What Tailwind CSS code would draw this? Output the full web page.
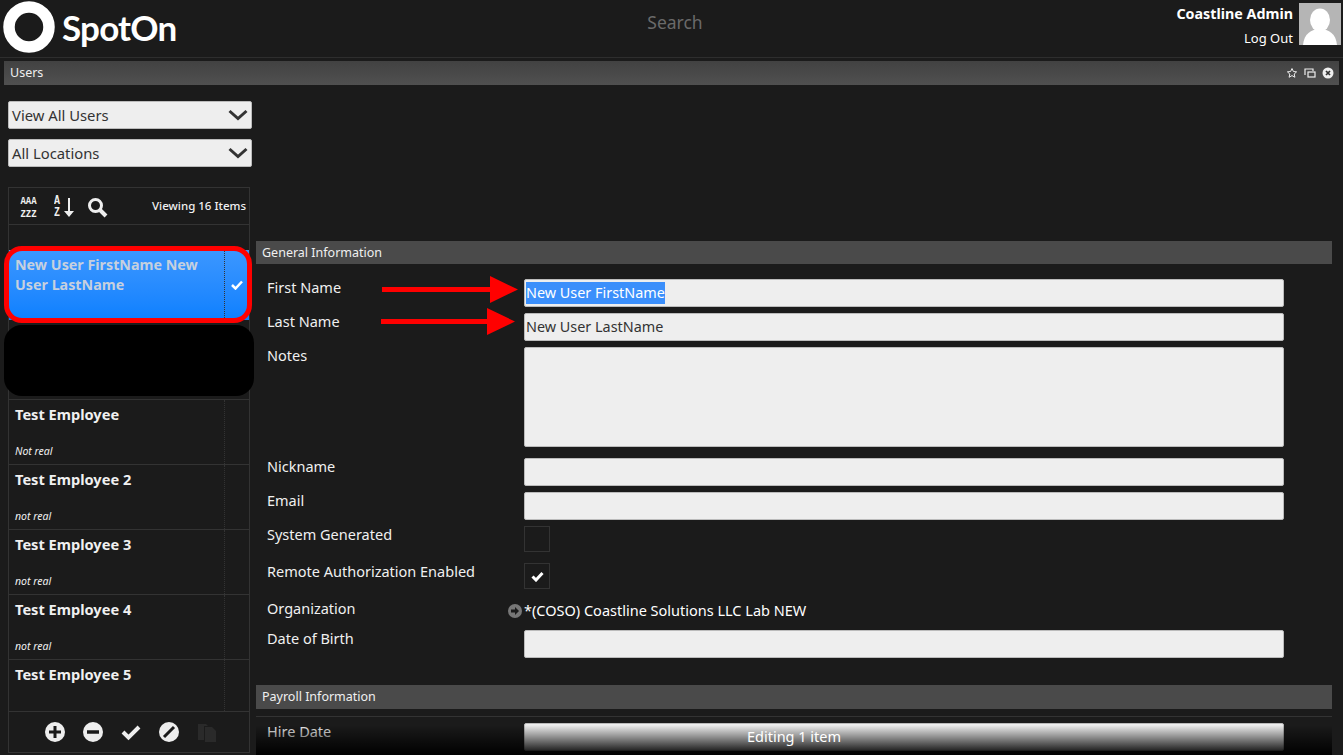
<!DOCTYPE html>
<html>
<head>
<meta charset="utf-8">
<title>Users</title>
<script src="https://cdn.jsdelivr.net/npm/@tailwindcss/browser@4"></script>
</head>
<body class="bg-[#1b1b1b] text-[#f0f0f0] font-['Noto_Sans',sans-serif] text-[14.5px] h-[755px] w-[1343px] overflow-hidden relative">

<!-- Header -->
<header class="h-[58px] flex items-start border-b border-[#2e2e2e]">
  <div class="w-[480px] flex items-center pl-[3px] pt-[1px]">
    <svg width="52" height="52" viewBox="0 0 52 52"><circle cx="26" cy="26" r="20" fill="none" stroke="#fff" stroke-width="11.500"/></svg>
    <span class="ml-[7px] text-[35px] leading-[52px] font-['Lato',sans-serif] font-bold text-white tracking-[-0.8px]">SpotOn</span>
  </div>
  <div class="w-[390px] text-center text-[#6a6a6a] text-[17.500px] leading-[24px] pt-[10px]">Search</div>
  <div class="flex-1 flex justify-end pr-[2px] pt-[3px]">
    <div class="text-right pr-[6px]">
      <div class="font-bold text-[14.300px] leading-[20px] mt-[1px] text-white">Coastline Admin</div>
      <div class="text-[13px] leading-[20px] mt-[4px] text-white">Log Out</div>
    </div>
    <div class="w-[42px] h-[42px] bg-[#b5b5b5] overflow-hidden">
      <svg width="42" height="42" viewBox="0 0 42 42"><ellipse cx="21" cy="17" rx="10" ry="11.5" fill="#fff"/><path d="M4 42c1-11 8-16 17-16s16 5 17 16z" fill="#fff"/></svg>
    </div>
  </div>
</header>

<!-- Panel title -->
<div class="mx-[4px] mt-[3px] h-[24px] bg-gradient-to-b from-[#424242] to-[#505050] flex items-center justify-between pl-[6px] pr-[5px] text-[12.500px]">
  <span>Users</span>
  <span class="flex items-center gap-[6px]">
    <svg width="12" height="12" viewBox="0 0 24 24" fill="none" stroke="#eee" stroke-width="2"><path d="M12 3l2.8 6 6.4.7-4.8 4.3 1.4 6.5L12 17.2 6.2 20.5 7.6 14 2.8 9.7 9.2 9z"/></svg>
    <svg width="12" height="12" viewBox="0 0 12 12" fill="none" stroke="#eee" stroke-width="1.2"><path d="M1 8V2h8v2"/><rect x="4" y="5" width="7" height="5"/></svg>
    <svg width="12" height="12" viewBox="0 0 24 24"><circle cx="12" cy="12" r="11" fill="#eee"/><path d="M8 8l8 8M16 8l-8 8" stroke="#333" stroke-width="3.5"/></svg>
  </span>
</div>

<div class="flex h-[670px]">
  <!-- Left column -->
  <aside class="w-[256px] shrink-0 pl-[8px] pt-[16px]">
    <div class="w-[244px] h-[28px] bg-[#eeeeee] rounded-[2px] border border-[#bbb] flex items-center justify-between pl-[3px] pr-[3px] text-[#333] text-[14.800px]">
      <span>View All Users</span>
      <svg width="20" height="12" viewBox="0 0 20 12" fill="none" stroke="#333" stroke-width="3"><path d="M1.5 2l8.500 7.500L18.500 2"/></svg>
    </div>
    <div class="w-[244px] h-[28px] mt-[10px] bg-[#eeeeee] rounded-[2px] border border-[#bbb] flex items-center justify-between pl-[3px] pr-[3px] text-[#333] text-[14.800px]">
      <span>All Locations</span>
      <svg width="20" height="12" viewBox="0 0 20 12" fill="none" stroke="#333" stroke-width="3"><path d="M1.5 2l8.500 7.500L18.500 2"/></svg>
    </div>

    <div class="w-[242px] h-[566px] mt-[20px] border border-[#333] flex flex-col">
      <div class="h-[37px] shrink-0 border-b border-[#333] flex items-center pl-[11px] pr-[3px]">
        <span class="w-[17px] mt-[4px] text-[9px] leading-[10px] font-bold text-center font-['Liberation_Mono',monospace] scale-y-[1.3]">AAA<br>ZZZ</span>
        <span class="ml-[17px] mt-[4px] w-[8px] text-[10px] leading-[10px] font-bold font-['Liberation_Mono',monospace] scale-y-[1.2]">A<br>Z</span>
        <svg class="ml-[2px] mt-[2px]" width="10" height="20" viewBox="0 0 10 20" fill="#eee"><path d="M4 1h2v13h4l-5 6-5-6h4z"/></svg>
        <svg class="ml-[13px] mt-[2px]" width="21" height="21" viewBox="0 0 21 21" fill="none" stroke="#eee"><circle cx="8.500" cy="8.500" r="6" stroke-width="3"/><path d="M13 13l6 6" stroke-width="4"/></svg>
        <span class="ml-auto text-[11.500px] font-medium">Viewing 16 Items</span>
      </div>
      <div class="h-[25px] shrink-0"></div>
      <div class="flex-1 overflow-hidden">
        <div class="h-[70px] bg-gradient-to-b from-[#3b97ff] to-[#0a80ff] flex">
          <div class="flex-1 pl-[6px] pt-[5px] font-bold text-[14.300px] leading-[20px] text-[#c6d0de]">New User FirstName New User LastName</div>
          <div class="w-[25px] border-l border-dotted border-[#333] flex items-center justify-center">
            <svg width="12" height="10" viewBox="0 0 12 10" fill="none" stroke="#fff" stroke-width="2.500"><path d="M1 5l3.500 3.500L11 1.500"/></svg>
          </div>
        </div>
        <div class="h-[80px] border-b border-[#333]"></div>
        <div class="h-[65px] border-b border-[#333] flex">
          <div class="flex-1 pl-[6px] pt-[4px] flex flex-col justify-between pb-[6px]">
            <div class="font-bold text-[14.600px] leading-[20px]">Test Employee</div>
            <div class="italic text-[10.500px] leading-[14px]">Not real</div>
          </div>
          <div class="w-[25px] border-l border-dotted border-[#333]"></div>
        </div>
        <div class="h-[65px] border-b border-[#333] flex">
          <div class="flex-1 pl-[6px] pt-[4px] flex flex-col justify-between pb-[6px]">
            <div class="font-bold text-[14.600px] leading-[20px]">Test Employee 2</div>
            <div class="italic text-[10.500px] leading-[14px]">not real</div>
          </div>
          <div class="w-[25px] border-l border-dotted border-[#333]"></div>
        </div>
        <div class="h-[65px] border-b border-[#333] flex">
          <div class="flex-1 pl-[6px] pt-[4px] flex flex-col justify-between pb-[6px]">
            <div class="font-bold text-[14.600px] leading-[20px]">Test Employee 3</div>
            <div class="italic text-[10.500px] leading-[14px]">not real</div>
          </div>
          <div class="w-[25px] border-l border-dotted border-[#333]"></div>
        </div>
        <div class="h-[65px] border-b border-[#333] flex">
          <div class="flex-1 pl-[6px] pt-[4px] flex flex-col justify-between pb-[6px]">
            <div class="font-bold text-[14.600px] leading-[20px]">Test Employee 4</div>
            <div class="italic text-[10.500px] leading-[14px]">not real</div>
          </div>
          <div class="w-[25px] border-l border-dotted border-[#333]"></div>
        </div>
        <div class="h-[65px] flex">
          <div class="flex-1 pl-[6px] pt-[4px]">
            <div class="font-bold text-[14.600px] leading-[20px]">Test Employee 5</div>
          </div>
          <div class="w-[25px] border-l border-dotted border-[#333]"></div>
        </div>
      </div>
      <div class="h-[41px] shrink-0 border-t border-[#333] flex items-center pl-[36px] gap-[18px]">
        <svg width="20" height="20" viewBox="0 0 20 20"><circle cx="10" cy="10" r="10" fill="#eee"/><path d="M10 4v12M4 10h12" stroke="#1b1b1b" stroke-width="3"/></svg>
        <svg width="20" height="20" viewBox="0 0 20 20"><circle cx="10" cy="10" r="10" fill="#eee"/><path d="M4 10h12" stroke="#1b1b1b" stroke-width="3.500"/></svg>
        <svg width="20" height="20" viewBox="0 0 20 20" fill="none" stroke="#eee" stroke-width="4"><path d="M2 10l5.500 5.500L18 5"/></svg>
        <svg width="20" height="20" viewBox="0 0 20 20"><circle cx="10" cy="10" r="10" fill="#eee"/><path d="M5 15L15 5" stroke="#1b1b1b" stroke-width="3"/></svg>
        <svg width="20" height="20" viewBox="0 0 20 20" fill="#2a2a2a"><path d="M1 2h8l2 2h-4v14H1z"/><path d="M8 5h7l4 4v11H8z"/></svg>
      </div>
    </div>
  </aside>

  <!-- Right form -->
  <main class="w-[1076px] pt-[156px]">
    <div class="h-[23px] bg-[#4a4a4a] flex items-center pl-[6px] pt-[1px] text-[12.500px]">General Information</div>

    <div class="pt-[15px] grid grid-cols-[268px_760px] gap-y-[6px]">
      <label class="pl-[11px] leading-[16px]">First Name</label>
      <div class="h-[28px] bg-[#eeeeee] rounded-[2px] border border-[#bbb] flex items-center pl-[1px] text-[14.400px] text-[#333]"><span class="bg-[#3b8ffb] text-white">New User FirstName</span></div>

      <label class="pl-[11px] leading-[16px]">Last Name</label>
      <div class="h-[28px] bg-[#eeeeee] rounded-[2px] border border-[#bbb] flex items-center pl-[1px] text-[14.400px] text-[#333]">New User LastName</div>

      <label class="pl-[11px] leading-[16px]">Notes</label>
      <div class="h-[100px] bg-[#eeeeee] rounded-[2px] border border-[#bbb]"></div>

      <label class="pl-[11px] leading-[16px] mt-[5px]">Nickname</label>
      <div class="h-[28px] mt-[5px] bg-[#eeeeee] rounded-[2px] border border-[#bbb]"></div>

      <label class="pl-[11px] leading-[16px]">Email</label>
      <div class="h-[28px] bg-[#eeeeee] rounded-[2px] border border-[#bbb]"></div>

      <label class="pl-[11px] leading-[16px]">System Generated</label>
      <div class="w-[26px] h-[26px] border border-[#333]"></div>

      <label class="pl-[11px] leading-[16px] mt-[5px]">Remote Authorization Enabled</label>
      <div class="w-[26px] h-[26px] mt-[5px] border border-[#333] flex items-center justify-center">
        <svg width="13" height="11" viewBox="0 0 13 11" fill="none" stroke="#fff" stroke-width="3"><path d="M1.500 5.500l3.500 3.500L11.500 2"/></svg>
      </div>

      <label class="pl-[11px] leading-[16px] mt-[5px]">Organization</label>
      <div class="mt-[4px] h-[24px] mb-[1px] relative flex items-center text-[14.500px] text-white">
        <svg class="absolute left-[-16px] top-[5px]" width="14" height="14" viewBox="0 0 14 14"><circle cx="7" cy="7" r="7" fill="#777"/><path d="M3 5.500h4V3l4 4-4 4V8.500H3z" fill="#1b1b1b"/></svg>
        *(COSO) Coastline Solutions LLC Lab NEW
      </div>

      <label class="pl-[11px] leading-[16px]">Date of Birth</label>
      <div class="h-[28px] bg-[#eeeeee] rounded-[2px] border border-[#bbb]"></div>
    </div>

    <div class="h-[24px] mt-[27px] bg-[#4a4a4a] flex items-center pl-[6px] text-[12.500px]">Payroll Information</div>
    <div class="mt-[7px] border-t border-[#333] pt-[6px] grid grid-cols-[268px_760px]">
      <label class="pl-[11px] leading-[16px]">Hire Date</label>
      <div class="h-[28px] bg-[#eeeeee] rounded-[2px] border border-[#bbb]"></div>
    </div>
  </main>
</div>

<!-- Editing status fade -->
<div class="absolute left-[256px] top-[725px] w-[1076px] h-[30px] bg-gradient-to-b from-black/0 to-black flex items-center justify-center pb-[6px] text-white">Editing 1 item</div>

<!-- Annotations on top of the screenshot -->
<div class="absolute left-[4px] top-[246px] w-[248px] h-[77px] border-[5px] border-[#ff0000] rounded-[18px]"></div>
<div class="absolute left-[4px] top-[325px] w-[250px] h-[71px] bg-black rounded-[18px]"></div>
<svg class="absolute left-[378px] top-[274px]" width="150" height="64" viewBox="0 0 150 64" fill="#ff0000">
  <path d="M4 13h108V2l28 13.500L112 29V18H4z"/>
  <path d="M3 45h106V34l28 13.500L109 61V50H3z"/>
</svg>
</body>
</html>
